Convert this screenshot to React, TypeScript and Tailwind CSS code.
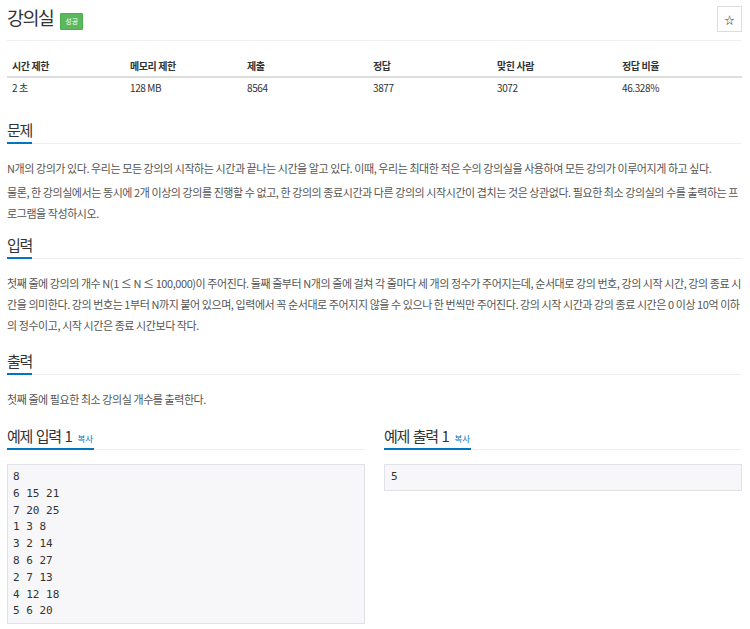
import React from "react";

const KR = { fontFamily: '"Noto Sans CJK KR", "Noto Sans", sans-serif' };
const MONO = { fontFamily: '"DejaVu Sans Mono", "Liberation Mono", monospace' };

function SectionHead({ title, link }: { title: string; link?: boolean }) {
  return (
    <div className="border-b border-[#eeeeee] flex">
      <div className="border-b-2 border-[#0076c0] -mb-px flex items-end pb-[2px]">
        <span className="text-[15px] leading-[20px] tracking-[-1.4px] [word-spacing:2px] text-[#333]">{title}</span>
        {link && (
          <span className="text-[8.5px] leading-[12px] text-[#0076c0] ml-[6px] mb-[2px] mr-[1px]">복사</span>
        )}
      </div>
    </div>
  );
}

export default function App() {
  const headers = ["시간 제한", "메모리 제한", "제출", "정답", "맞힌 사람", "정답 비율"];
  const values = ["2 초", "128 MB", "8564", "3877", "3072", "46.328%"];
  const sample = ["8", "6 15 21", "7 20 25", "1 3 8", "3 2 14", "8 6 27", "2 7 13", "4 12 18", "5 6 20"];
  const cols = "grid grid-cols-[118px_117px_126px_124px_125px_1fr] pl-[5px]";
  const body = "text-[11px] leading-[21px] tracking-[-0.43px] mt-[14px]";
  return (
    <div className="w-[750px] h-[629px] bg-white overflow-hidden pl-[7px] pr-[8px] text-[#555]" style={KR}>
      <div className="flex items-start justify-between h-[41px] border-b border-[#eeeeee]">
        <div className="flex items-start pt-[4px]">
          <span className="text-[18.5px] leading-[26px] tracking-[-1.6px] text-[#333]">강의실</span>
          <span className="ml-[7px] mt-[9px] bg-[#5cb85c] text-white text-[7px] leading-[9px] px-[4px] py-[3px] rounded-[1px] border border-[#4cae4c]">
            성공
          </span>
        </div>
        <div className="mt-[6px] w-[25px] h-[26px] border border-[#dddddd] flex items-center justify-center text-[10px] text-[#333] bg-white">
          ☆
        </div>
      </div>

      <div className="mt-[14px] text-[10px] tracking-[-0.4px]">
        <div className={`${cols} font-bold text-[#333] border-b-2 border-[#dddddd] h-[23px] leading-[21px]`}>
          {headers.map((h) => (
            <div key={h}>{h}</div>
          ))}
        </div>
        <div className={`${cols} text-[#333] h-[20px] leading-[20px]`}>
          {values.map((h) => (
            <div key={h}>{h}</div>
          ))}
        </div>
      </div>

      <div className="mt-[22px]">
        <SectionHead title="문제" />
        <div className={body}>
          <p>
            N개의 강의가 있다. 우리는 모든 강의의 시작하는 시간과 끝나는 시간을 알고 있다. 이때, 우리는 최대한 적은 수의 강의실을 사용하여 모든 강의가 이루어지게 하고 싶다.
          </p>
          <p className="mt-[3px]">
            물론, 한 강의실에서는 동시에 2개 이상의 강의를 진행할 수 없고, 한 강의의 종료시간과 다른 강의의 시작시간이 겹치는 것은 상관없다. 필요한 최소 강의실의 수를 출력하는 프로그램을 작성하시오.
          </p>
        </div>
      </div>

      <div className="mt-[11px]">
        <SectionHead title="입력" />
        <div className={body}>
          <p>
            첫째 줄에 강의의 개수 N(1 ≤ N ≤ 100,000)이 주어진다. 둘째 줄부터 N개의 줄에 걸쳐 각 줄마다 세 개의 정수가 주어지는데, 순서대로 강의 번호, 강의 시작 시간, 강의 종료 시간을 의미한다. 강의 번호는 1부터 N까지 붙어 있으며, 입력에서 꼭 순서대로 주어지지 않을 수 있으나 한 번씩만 주어진다. 강의 시작 시간과 강의 종료 시간은 0 이상 10억 이하의 정수이고, 시작 시간은 종료 시간보다 작다.
          </p>
        </div>
      </div>

      <div className="mt-[15px]">
        <SectionHead title="출력" />
        <div className={body}>
          <p>첫째 줄에 필요한 최소 강의실 개수를 출력한다.</p>
        </div>
      </div>

      <div className="grid grid-cols-2 gap-[19px] mt-[16px]">
        <div>
          <SectionHead title="예제 입력 1" link />
          <pre
            className="mt-[14px] bg-[#f7f7f9] border border-[#e1e1e8] pl-[5px] pt-[4px] pb-[3px] text-[11px] leading-[16.8px] text-[#333]"
            style={MONO}
          >
            {sample.join("\n")}
          </pre>
        </div>
        <div>
          <SectionHead title="예제 출력 1" link />
          <pre
            className="mt-[14px] bg-[#f7f7f9] border border-[#e1e1e8] pl-[6px] pt-[4px] pb-[4px] text-[11px] leading-[16.8px] text-[#333]"
            style={MONO}
          >
            5
          </pre>
        </div>
      </div>
    </div>
  );
}
